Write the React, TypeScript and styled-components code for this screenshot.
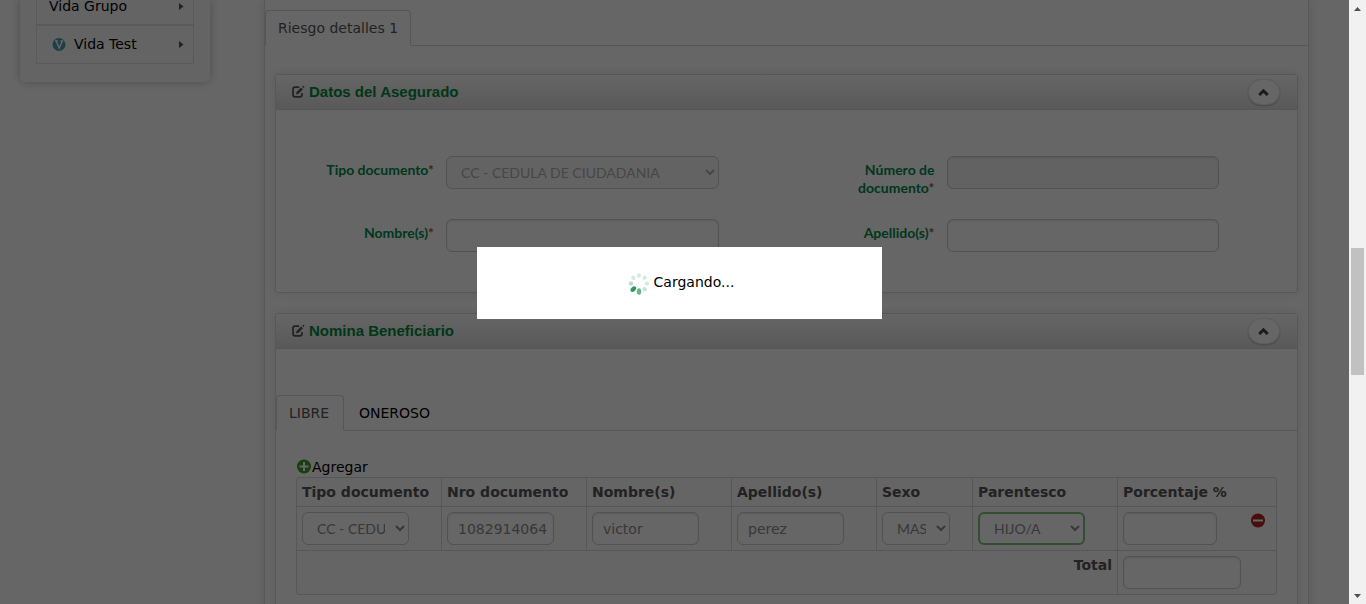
import React from "react";
import styled, { createGlobalStyle } from "styled-components";

const GlobalStyle = createGlobalStyle`
  *, *::before, *::after { box-sizing: border-box; }
  body {
    margin: 0;
    background: #fff;
    color: #000;
    font: 14px/20px "DejaVu Sans", Verdana, sans-serif;
  }
`;

const Window = styled.div`
  display: grid;
  grid-template-columns: minmax(0, 1fr) 17px;
  height: 100vh;
  overflow: hidden;
`;

const Page = styled.div`
  position: relative;
  display: flex;
  align-items: flex-start;
  min-width: 0;
  height: 100vh;
  overflow: hidden;
`;

const Sidebar = styled.nav`
  flex: none;
  width: 190px;
  margin: 0 54px 0 20px;
  padding: 0 16px 18px;
  background: #fbfbfb;
  border-radius: 0 0 5px 5px;
  box-shadow: 0 0 10px rgba(0, 0, 0, 0.25);
`;

const Menu = styled.ul`
  list-style: none;
  margin: 0;
  padding: 0;
`;

const MenuItem = styled.li<{ $cut?: boolean }>`
  height: ${(p) => (p.$cut ? 25 : 39)}px;
  border: 1px solid #e2e2e2;
  border-top-width: ${(p) => (p.$cut ? 0 : 1)}px;
`;

const MenuLink = styled.a<{ $cut?: boolean }>`
  display: flex;
  align-items: center;
  gap: 8px;
  padding: ${(p) => (p.$cut ? "0 9px 12px 12px" : "8px 9px 8px 15px")};
  line-height: ${(p) => (p.$cut ? 12 : 20)}px;
  color: #000;
  text-decoration: none;
  svg:last-child { margin-left: auto; }
`;

const Main = styled.main`
  flex: 1;
  min-width: 0;
  min-height: 100vh;
  margin-right: 40px;
  padding-top: 10px;
  border: solid #dcdcdc;
  border-width: 0 1px;
  box-shadow: 0 0 10px rgba(0, 0, 0, 0.12);
`;

const Tabs = styled.ul`
  display: flex;
  gap: 2px;
  list-style: none;
  margin: 0;
  padding: 0;
  border-bottom: 1px solid #d6d6d6;
`;

const Tab = styled.a<{ $active?: boolean }>`
  display: block;
  min-width: 68px;
  margin-bottom: -1px;
  padding: 7px 12px;
  border: 1px solid ${(p) => (p.$active ? "#d6d6d6" : "transparent")};
  border-bottom-color: ${(p) => (p.$active ? "#fff" : "transparent")};
  border-radius: 4px 4px 0 0;
  color: ${(p) => (p.$active ? "#555" : "#000")};
  text-decoration: none;
`;

const Panels = styled.div`
  display: grid;
  gap: 20px;
  padding: 28px 10px 0;
`;

const Panel = styled.section`
  border: 1px solid #d9d9d9;
  border-radius: 3px;
  box-shadow: 0 0 10px rgba(0, 0, 0, 0.1);
`;

const PanelHead = styled.header`
  display: flex;
  align-items: center;
  height: 35px;
  padding: 0 17px 0 15px;
  gap: 4px;
  background: linear-gradient(#fefefe, #dfdfdf);
  border-bottom: 1px solid #d4d4d4;
`;

const PanelTitle = styled.h2`
  flex: 1;
  margin: 0;
  color: #008a3c;
  font: bold 15px/20px "Liberation Sans", Arial, sans-serif;
`;

const Collapse = styled.button`
  display: grid;
  place-items: center;
  width: 32px;
  height: 26px;
  padding: 0;
  background: #fff;
  border: 1px solid #e6e6e6;
  border-radius: 16px;
  box-shadow: 0 1px 2px rgba(0, 0, 0, 0.2);
`;

const Fields = styled.form`
  display: grid;
  grid-template-columns: 1fr 1fr;
  row-gap: 30px;
  padding: 46px 0 40px 20px;
`;

const Field = styled.div`
  display: grid;
  grid-template-columns: 138px minmax(0, 1fr);
  column-gap: 12px;
  height: 33px;
  padding-right: 78px;
`;

const Label = styled.label`
  padding: 5px 0 0 20px;
  color: #008a4a;
  font: bold 14px/18px Lato, sans-serif;
  text-align: right;
`;

const Required = styled.span`
  color: #b94a48;
`;

const TextInput = styled.input<{ $w?: string }>`
  display: block;
  width: ${(p) => p.$w || "100%"};
  height: 33px;
  padding: 6px 6px 6px 10px;
  background: #fff;
  border: 1px solid #ccc;
  border-radius: 6px;
  box-shadow: inset 0 1px 2px rgba(0, 0, 0, 0.1);
  color: #8c8c8c;
  font: 14px/20px "DejaVu Sans", Verdana, sans-serif;
  &:disabled { background: #f5f5f5; }
`;

const Select = styled.select<{ $w?: string; $valid?: boolean }>`
  display: block;
  width: ${(p) => p.$w || "100%"};
  height: 33px;
  padding: ${(p) => (p.$valid ? "5px 7px 5px 10px" : "6px 7px 6px 10px")};
  background: #fff;
  border: ${(p) => (p.$valid ? "2px solid #7bc47b" : "1px solid #ccc")};
  border-radius: 6px;
  color: #8c8c8c;
  font: 14px/20px Lato, sans-serif;
  &:disabled { background: #f8f8f8; color: #b0b0b0; opacity: 1; }
`;

const Nomina = styled.div`
  padding: 46px 0 40px;
`;

const TabBody = styled.div`
  padding: 26px 20px 0;
`;

const AddButton = styled.button`
  display: flex;
  align-items: center;
  padding: 0;
  background: none;
  border: 0;
  color: #000;
  font: inherit;
`;

const Table = styled.table`
  width: 100%;
  table-layout: fixed;
  border: 1px solid #d9d9d9;
  border-top-width: 0;
  border-left-width: 0;
  border-collapse: separate;
  border-spacing: 0;
  border-radius: 4px;
  background: #fcfcfc;
`;

const Col = styled.col<{ $w?: number }>`
  width: ${(p) => (p.$w ? p.$w + "px" : "auto")};
`;

const Th = styled.th`
  padding: 4px 5px;
  border: solid #d9d9d9;
  border-width: 1px 0 0 1px;
  color: #555;
  text-align: left;
  white-space: nowrap;
  &:first-child { border-top-left-radius: 4px; }
`;

const Td = styled.td`
  padding: 5px;
  border: solid #d9d9d9;
  border-width: 1px 0 0 1px;
  vertical-align: top;
`;

const TotalCell = styled.th`
  padding: 4px 5px;
  border: solid #d9d9d9;
  border-width: 1px 0 0 1px;
  border-bottom-left-radius: 4px;
  color: #555;
  text-align: right;
  vertical-align: top;
`;

const Percent = styled.div`
  display: flex;
  align-items: flex-start;
  gap: 34px;
`;

const IconButton = styled.button`
  display: block;
  padding: 1px 0 0;
  background: none;
  border: 0;
  svg { display: block; }
`;

const Overlay = styled.div`
  position: absolute;
  inset: 0;
  background: rgba(0, 0, 0, 0.6);
`;

const Loading = styled.div`
  position: absolute;
  top: 40%;
  left: 35%;
  width: 30%;
  height: 72px;
  margin: 5px;
  padding: 0 0 2px 4px;
  display: flex;
  align-items: center;
  justify-content: center;
  gap: 5px;
  background: #fff;
  svg { margin-top: 4px; }
`;

const Scrollbar = styled.div`
  display: flex;
  flex-direction: column;
  align-items: center;
  justify-content: space-between;
  height: 100vh;
  padding: 7px 0 6px;
  background: #f1f1f1;
`;

const Track = styled.div`
  flex: 1;
  width: 13px;
  padding-top: 237px;
`;

const Thumb = styled.div`
  height: 127px;
  background: #c1c1c1;
`;

const Caret = () => (
  <svg width="5" height="7" viewBox="0 0 5 7" aria-hidden="true">
    <path d="M0 0 L4.500 3.500 L0 7 Z" fill="#555" />
  </svg>
);

const VidaIcon = () => (
  <svg width="14" height="14" viewBox="0 0 14 14" aria-hidden="true">
    <circle cx="7" cy="7.500" r="6.500" fill="#4a9fb0" />
    <path d="M3 4h3M8.500 4h2.800M4.200 4.300L7.200 11 10.200 4.300" fill="none" stroke="#fff" strokeWidth="1.400" />
  </svg>
);

const EditIcon = () => (
  <svg width="14" height="14" viewBox="0 0 14 14" aria-hidden="true">
    <path d="M8.200 2.200H4Q2 2.200 2 4.200v5.600q0 2 2 2h5q2 0 2-2V8" fill="none" stroke="#555" strokeWidth="1.700" />
    <path d="M5 9.400l.6-2.500 4.500-4.500 1.900 1.900-4.500 4.500zM11.200 1.700l.6-.6q.5-.4 1 0l.4.4q.4.5 0 1l-.6.6z" fill="#555" />
  </svg>
);

const ChevronUp = () => (
  <svg width="12" height="9" viewBox="0 0 12 9" aria-hidden="true">
    <path d="M1.300 7L5.500 2.800 9.700 7" fill="none" stroke="#444" strokeWidth="3" />
  </svg>
);

const AddIcon = () => (
  <svg width="16" height="16" viewBox="0 0 16 16" aria-hidden="true">
    <circle cx="8" cy="7.500" r="7" fill="#3f9c2a" />
    <path d="M8 3v9M3.500 7.500h9" stroke="#fff" strokeWidth="2" />
  </svg>
);

const RemoveIcon = () => (
  <svg width="14" height="15" viewBox="0 0 14 15" aria-hidden="true">
    <circle cx="7" cy="7.500" r="7" fill="#b3241c" />
    <path d="M2 7.500h10" stroke="#fff" strokeWidth="2" />
  </svg>
);

const petals = ["#d3ebdf", "#d3ebdf", "#d3ebdf", "#c4e4d3", "#66b68b", "#2c9a5f", "#b5dcc8", "#d3ebdf"];

const Spinner = () => (
  <svg width="20" height="24" viewBox="0 0 20 24" aria-hidden="true">
    {petals.map((fill, i) => (
      <ellipse
        key={i}
        cx="10"
        cy="3.500"
        rx={i === 4 || i === 5 ? 2.2 : 2}
        ry={i === 4 || i === 5 ? 3.3 : 2.2}
        fill={fill}
        transform={`rotate(${i * 45} 10 11.500)`}
      />
    ))}
  </svg>
);

const ScrollArrow = ({ down }: { down?: boolean }) => (
  <svg width="7" height="4" viewBox="0 0 7 4" aria-hidden="true">
    <path d={down ? "M0 0h7L3.500 4z" : "M0 4h7L3.500 0z"} fill="#505050" />
  </svg>
);

const columns = ["Tipo documento", "Nro documento", "Nombre(s)", "Apellido(s)", "Sexo", "Parentesco", "Porcentaje %"];
const widths = [145, 145, 145, 145, 96, 145];

const PanelHeader = ({ title }: { title: string }) => (
  <PanelHead>
    <EditIcon />
    <PanelTitle>{title}</PanelTitle>
    <Collapse type="button" aria-label={`Contraer ${title}`}>
      <ChevronUp />
    </Collapse>
  </PanelHead>
);

export default function App() {
  return (
    <>
      <GlobalStyle />
      <Window>
        <Page>
          <Sidebar>
            <Menu>
              <MenuItem $cut>
                <MenuLink href="#grupo" $cut>Vida Grupo<Caret /></MenuLink>
              </MenuItem>
              <MenuItem>
                <MenuLink href="#test"><VidaIcon />Vida Test<Caret /></MenuLink>
              </MenuItem>
            </Menu>
          </Sidebar>
          <Main>
            <Tabs>
              <li><Tab href="#riesgo" $active>Riesgo detalles 1</Tab></li>
            </Tabs>
            <Panels>
              <Panel>
                <PanelHeader title="Datos del Asegurado" />
                <Fields>
                  <Field>
                    <Label htmlFor="tipo">Tipo documento<Required>*</Required></Label>
                    <Select id="tipo" disabled><option>CC - CEDULA DE CIUDADANIA</option></Select>
                  </Field>
                  <Field>
                    <Label htmlFor="numero">Número de documento<Required>*</Required></Label>
                    <TextInput id="numero" disabled />
                  </Field>
                  <Field>
                    <Label htmlFor="nombre">Nombre(s)<Required>*</Required></Label>
                    <TextInput id="nombre" />
                  </Field>
                  <Field>
                    <Label htmlFor="apellido">Apellido(s)<Required>*</Required></Label>
                    <TextInput id="apellido" />
                  </Field>
                </Fields>
              </Panel>
              <Panel>
                <PanelHeader title="Nomina Beneficiario" />
                <Nomina>
                  <Tabs>
                    <li><Tab href="#libre" $active>LIBRE</Tab></li>
                    <li><Tab href="#oneroso">ONEROSO</Tab></li>
                  </Tabs>
                  <TabBody>
                    <AddButton type="button"><AddIcon />Agregar</AddButton>
                    <Table>
                      <colgroup>
                        {widths.map((w, i) => <Col key={i} $w={w} />)}
                        <Col />
                      </colgroup>
                      <thead>
                        <tr>{columns.map((c) => <Th key={c} scope="col">{c}</Th>)}</tr>
                      </thead>
                      <tbody>
                        <tr>
                          <Td>
                            <Select $w="107px" aria-label="Tipo documento"><option>CC - CEDULA DE CIUDADANIA</option></Select>
                          </Td>
                          <Td><TextInput $w="107px" aria-label="Nro documento" defaultValue="1082914064" /></Td>
                          <Td><TextInput $w="107px" aria-label="Nombre(s)" defaultValue="victor" /></Td>
                          <Td><TextInput $w="107px" aria-label="Apellido(s)" defaultValue="perez" /></Td>
                          <Td><Select $w="68px" aria-label="Sexo"><option>MASCULINO</option></Select></Td>
                          <Td><Select $w="107px" $valid aria-label="Parentesco"><option>HIJO/A</option></Select></Td>
                          <Td>
                            <Percent>
                              <TextInput $w="94px" aria-label="Porcentaje %" />
                              <IconButton type="button" aria-label="Eliminar"><RemoveIcon /></IconButton>
                            </Percent>
                          </Td>
                        </tr>
                        <tr>
                          <TotalCell colSpan={6} scope="row">Total</TotalCell>
                          <Td><TextInput $w="118px" aria-label="Total" /></Td>
                        </tr>
                      </tbody>
                    </Table>
                  </TabBody>
                </Nomina>
              </Panel>
            </Panels>
          </Main>
          <Overlay />
          <Loading role="status"><Spinner />Cargando...</Loading>
        </Page>
        <Scrollbar aria-hidden="true">
          <ScrollArrow />
          <Track><Thumb /></Track>
          <ScrollArrow down />
        </Scrollbar>
      </Window>
    </>
  );
}
